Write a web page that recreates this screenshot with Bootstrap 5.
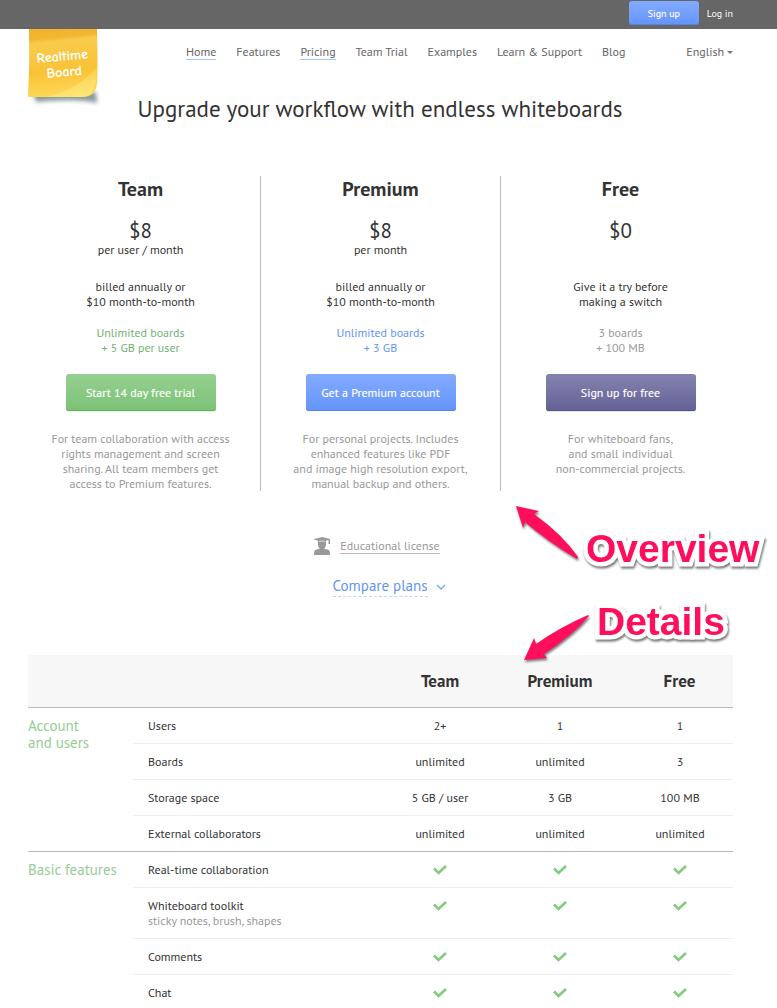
<!DOCTYPE html>
<html lang="en">
<head>
<meta charset="utf-8">
<meta name="viewport" content="width=device-width, initial-scale=1">
<title>RealtimeBoard Pricing</title>
<link href="https://cdn.jsdelivr.net/npm/bootstrap@5.3.0/dist/css/bootstrap.min.css" rel="stylesheet">
<style>
body{font-family:"PT Sans","Noto Sans","Open Sans",sans-serif;font-size:12px;line-height:15px;color:#333;background:#fff}
a{color:inherit;text-decoration:none}
.topbar{height:29px;background:#666;padding:0 44px 3px 0;gap:8px;font-size:10px}
.topbar a{color:#fff;font-weight:500}
.grad-btn{border:0;border-radius:3px;color:#fff;line-height:15px;font-weight:500;text-shadow:0 0 1px rgba(255,255,255,.4)}
.grad-blue{background:linear-gradient(#83aaff,#6495fb);box-shadow:inset 0 -1px #5585e8}
.grad-green{background:linear-gradient(#96d090,#7bc275);box-shadow:inset 0 -1px #68ae66,0 1px #e0f3e0}
.grad-violet{background:linear-gradient(#8482ad,#646296);box-shadow:inset 0 -1px #55548a,0 1px #e4e4f4}
.top-btn{width:70px;height:24px;padding:4px 0}
.masthead{padding:15px 44px 0 186px;height:65px;color:#666}
.main-links{gap:20px}
.main-links a,.lang-link{line-height:15px;border-bottom:1px solid transparent}
.main-links .current{border-color:#a9c0ff}
.brand-note{position:absolute;left:26px;top:0}
.brand-note text{font-family:"Comic Neue",Lato,sans-serif;font-weight:700;fill:#fff}
.caret{display:inline-block;border:3px solid transparent;border-top-color:#777;border-bottom:0;vertical-align:2px;margin-left:3px}
h1{font-size:23px;line-height:30px;font-weight:400;margin:0 0 52px}
.plans{padding:0 37px 0 20px}
.plan{text-align:center;border-left:1px solid transparent}
.plan+.plan{border-color:#bbb}
.plan h2{font-size:20px;line-height:26px;font-weight:700;margin:0 0 17px}
.price{font-size:21px;line-height:23px}
.per{height:15px;margin-bottom:22px}
.quota{margin:16px 0 19px}
.plan-btn{width:150px;height:37px;padding:0;margin-bottom:20px}
.c-green{color:#74b174}.c-blue{color:#6495f5}.c-gray{color:#999}
.edu{margin-top:46px;padding-right:6px;gap:10px;color:#999}
.edu a{border-bottom:1px solid #bbb;line-height:15px}
.compare{margin:21px 0 58px;padding-left:18px;gap:8px;color:#6495f5;font-size:15px;line-height:20px}
.compare span{border-bottom:1px dashed #c5d4fa}
.details{padding:0 44px 0 28px}
.details table{width:100%;table-layout:fixed;border-collapse:separate;border-spacing:0}
.details thead th{background:#f7f7f7;height:53px;font-size:17px;font-weight:700;border-bottom:1px solid #bbb;text-align:center}
.details tbody td,.details tbody th{height:36px;padding:10px 0;vertical-align:top;font-weight:400;border-bottom:1px solid #eee;text-align:center}
.details tbody th.item{text-align:left;padding-left:15px}
.details tr>:last-child:not(.item){padding-left:7px}
.details tbody th.group{font-size:15px;line-height:17px;padding-top:9px;color:#97cc95;text-align:left;border-color:#bbb}
.details .section-end td,.details .section-end th{border-color:#bbb}
.details tbody .last-row>*{border:0;height:33px;padding-bottom:8px}
.details tbody th.group.open{border:0}
.tick{display:block;margin:3px auto 0}
.callout{position:absolute;font:700 39px/44px "Liberation Sans",Arial,sans-serif;color:#ff0f5b;-webkit-text-stroke:9px #fff;paint-order:stroke fill;filter:drop-shadow(1px 2px 1px rgba(0,0,0,.55));z-index:2}
.callout-arrow{position:absolute;z-index:2;filter:drop-shadow(1px 2px 1px rgba(0,0,0,.5))}
</style>
</head>
<body>
<svg class="d-none"><symbol id="tick" viewBox="0 0 14 10"><path d="M1 3.500 5.500 8 13 1" fill="none" stroke="#83cb7d" stroke-width="2.600"/></symbol></svg>

<div class="topbar d-flex justify-content-end align-items-center">
  <button type="button" class="grad-btn grad-blue top-btn">Sign up</button>
  <a href="#">Log in</a>
</div>

<header class="position-relative">
  <a href="#" class="brand-note" aria-label="Realtime Board">
    <svg width="76" height="80" viewBox="0 0 76 80">
      <defs>
        <linearGradient id="paper" x1="0" y1="0" x2=".1" y2="1"><stop offset="0" stop-color="#f2b32e"/><stop offset=".16" stop-color="#f2b631"/><stop offset=".22" stop-color="#f9cb4b"/><stop offset=".65" stop-color="#f9c236"/><stop offset=".85" stop-color="#fccd48"/><stop offset="1" stop-color="#fdd657"/></linearGradient>
        <linearGradient id="curl" x1=".5" y1="0" x2="1" y2="1"><stop offset="0" stop-color="#ffe87a" stop-opacity="0"/><stop offset="1" stop-color="#ffe87a"/></linearGradient>
        <filter id="soft" x="-20%" y="-60%" width="140%" height="260%"><feGaussianBlur stdDeviation="2"/></filter>
      </defs>
      <path d="M7 63H70L71 74Q50 69 10 73Z" fill="#61777a" opacity=".75" filter="url(#soft)"/>
      <path d="M3 0H71Q72 35 71 54Q70 68 56 68L2 68Q4 34 3 0Z" fill="url(#paper)"/>
      <path d="M71 38Q71 68 56 68L20 68Q53 60 71 38Z" fill="url(#curl)"/>
      <text x="11" y="34" font-size="14" transform="rotate(-5 11 34)">Realtime</text>
      <text x="21" y="49" font-size="14" transform="rotate(-5 21 49)">Board</text>
    </svg>
  </a>
  <nav class="masthead d-flex align-items-start justify-content-between">
    <div class="main-links d-flex">
      <a href="#" class="current">Home</a><a href="#">Features</a><a href="#" class="current">Pricing</a><a href="#">Team Trial</a><a href="#">Examples</a><a href="#">Learn &amp; Support</a><a href="#">Blog</a>
    </div>
    <a href="#" class="lang-link">English<span class="caret"></span></a>
  </nav>
</header>

<main>
  <h1 class="text-center plans">Upgrade your workflow with endless whiteboards</h1>
  <div class="position-relative">
    <section class="plans">
      <div class="row g-0">
        <div class="col-4 plan">
          <h2>Team</h2>
          <div class="price">$8</div><div class="per">per user / month</div>
          <div>billed annually or<br>$10 month-to-month</div>
          <div class="quota c-green">Unlimited boards<br>+ 5 GB per user</div>
          <button type="button" class="grad-btn grad-green plan-btn">Start 14 day free trial</button>
          <div class="c-gray">For team collaboration with access<br>rights management and screen<br>sharing. All team members get<br>access to Premium features.</div>
        </div>
        <div class="col-4 plan">
          <h2>Premium</h2>
          <div class="price">$8</div><div class="per">per month</div>
          <div>billed annually or<br>$10 month-to-month</div>
          <div class="quota c-blue">Unlimited boards<br>+ 3 GB</div>
          <button type="button" class="grad-btn grad-blue plan-btn">Get a Premium account</button>
          <div class="c-gray">For personal projects. Includes<br>enhanced features like PDF<br>and image high resolution export,<br>manual backup and others.</div>
        </div>
        <div class="col-4 plan">
          <h2>Free</h2>
          <div class="price">$0</div><div class="per"></div>
          <div>Give it a try before<br>making a switch</div>
          <div class="quota c-gray">3 boards<br>+ 100 MB</div>
          <button type="button" class="grad-btn grad-violet plan-btn">Sign up for free</button>
          <div class="c-gray">For whiteboard fans,<br>and small individual<br>non-commercial projects.</div>
        </div>
      </div>
    </section>

    <div class="plans">
      <div class="edu d-flex justify-content-center align-items-center">
        <svg width="16" height="18" viewBox="0 0 16 18" fill="#999"><path d="M0 2 8 0l8 2v5h-1.500V3l-2.500.7V5Q12.500 10 10 11.500L15 13q1 1 1 5H0q0-4 1-5l5-1.500Q3.500 10 4 5V3.700L0 2.500Z"/><path d="M5 4.500Q8 3.500 11 4.500" fill="none" stroke="#ddd"/></svg>
        <a href="#">Educational license</a>
      </div>
      <div class="d-flex justify-content-center">
        <a href="#details" class="compare d-flex align-items-center"><span>Compare plans</span>
          <svg width="10" height="6" viewBox="0 0 10 6" fill="none" stroke="#6fa8f5" stroke-width="1.300"><path d="m1 1 4 4 4-4"/></svg></a>
      </div>
    </div>

    <svg class="callout-arrow" style="left:515px;top:329px" width="64" height="56" viewBox="0 0 64 56"><path d="M1 1 24 6 19 9Q47 29 63 52L62 54Q32 36 10 17L8 23Z" fill="#ff0f5b"/></svg>
    <div class="callout" style="left:586px;top:351px">Overview</div>
    <svg class="callout-arrow" style="left:523px;top:438px" width="68" height="47" viewBox="0 0 68 47"><path d="M1 46 11 24 13 30Q37 13 65 1L66 2Q50 21 21 40L24 44Z" fill="#ff0f5b"/></svg>
    <div class="callout" style="left:597px;top:424px">Details</div>
  </div>

  <section class="details" id="details">
    <table>
      <colgroup><col style="width:105px"><col><col style="width:120px"><col style="width:120px"><col style="width:113px"></colgroup>
      <thead><tr><th></th><th></th><th scope="col">Team</th><th scope="col">Premium</th><th scope="col">Free</th></tr></thead>
      <tbody>
        <tr><th class="group" scope="rowgroup" rowspan="4">Account<br>and users</th><th class="item" scope="row">Users</th><td>2+</td><td>1</td><td>1</td></tr>
        <tr><th class="item" scope="row">Boards</th><td>unlimited</td><td>unlimited</td><td>3</td></tr>
        <tr><th class="item" scope="row">Storage space</th><td>5 GB / user</td><td>3 GB</td><td>100 MB</td></tr>
        <tr class="section-end"><th class="item" scope="row">External collaborators</th><td>unlimited</td><td>unlimited</td><td>unlimited</td></tr>
      </tbody>
      <tbody>
        <tr><th class="group open" scope="rowgroup" rowspan="4">Basic features</th><th class="item" scope="row">Real-time collaboration</th><td><svg class="tick" width="14" height="10"><use href="#tick"/></svg></td><td><svg class="tick" width="14" height="10"><use href="#tick"/></svg></td><td><svg class="tick" width="14" height="10"><use href="#tick"/></svg></td></tr>
        <tr><th class="item" scope="row">Whiteboard toolkit<br><span class="c-gray">sticky notes, brush, shapes</span></th><td><svg class="tick" width="14" height="10"><use href="#tick"/></svg></td><td><svg class="tick" width="14" height="10"><use href="#tick"/></svg></td><td><svg class="tick" width="14" height="10"><use href="#tick"/></svg></td></tr>
        <tr><th class="item" scope="row">Comments</th><td><svg class="tick" width="14" height="10"><use href="#tick"/></svg></td><td><svg class="tick" width="14" height="10"><use href="#tick"/></svg></td><td><svg class="tick" width="14" height="10"><use href="#tick"/></svg></td></tr>
        <tr class="last-row"><th class="item" scope="row">Chat</th><td><svg class="tick" width="14" height="10"><use href="#tick"/></svg></td><td><svg class="tick" width="14" height="10"><use href="#tick"/></svg></td><td><svg class="tick" width="14" height="10"><use href="#tick"/></svg></td></tr>
      </tbody>
    </table>
  </section>
</main>
<script src="https://cdn.jsdelivr.net/npm/bootstrap@5.3.0/dist/js/bootstrap.bundle.min.js"></script>
</body>
</html>
